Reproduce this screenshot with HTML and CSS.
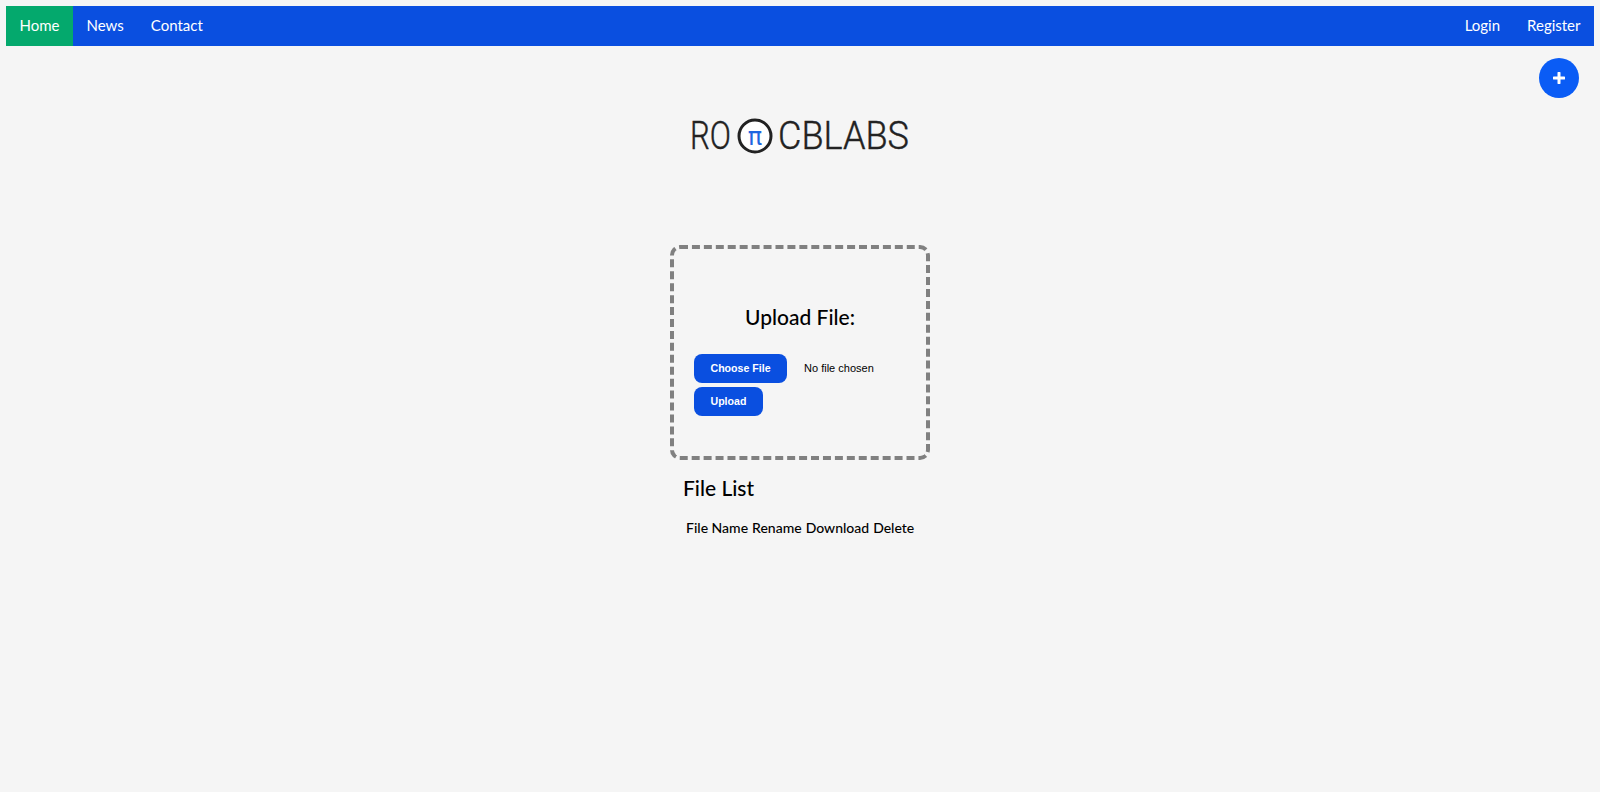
FILE: index.html
```html
<!DOCTYPE html>
<html lang="en">
<head>
  <meta charset="UTF-8">
  <meta name="viewport" content="width=device-width, initial-scale=1.0">
  <title>Rootcblabs</title>
  <link rel="stylesheet" href="styles.css">
</head>

<body>
  <nav class="topnav">
    <div class="nav-group">
      <a class="nav-link active" href="#">Home</a>
      <a class="nav-link" href="#">News</a>
      <a class="nav-link" href="#">Contact</a>
    </div>
    <div class="nav-group">
      <a class="nav-link" href="#">Login</a>
      <a class="nav-link" href="#">Register</a>
    </div>
  </nav>

  <button class="add-fab" aria-label="Add">
    <svg width="12" height="12" viewBox="0 0 12 12">
      <path d="M6 1v10M1 6h10" stroke="#fff" stroke-width="3" stroke-linecap="round"/>
    </svg>
  </button>

  <div class="logo">
    <svg width="300" height="48" viewBox="0 0 300 48">
      <text class="logo-text" x="40" y="37" textLength="41" lengthAdjust="spacingAndGlyphs">RO</text>
      <circle cx="105" cy="24" r="16" fill="#fff" stroke="#222" stroke-width="3"/>
      <text class="logo-pi" x="105" y="33" text-anchor="middle">π</text>
      <text class="logo-text" x="128" y="37" textLength="131" lengthAdjust="spacingAndGlyphs">CBLABS</text>
    </svg>
  </div>

  <main class="content">
    <form class="upload-box">
      <h2>Upload File:</h2>
      <div class="file-row">
        <button type="button" class="blue-btn">Choose File</button>
        <span class="file-status">No file chosen</span>
      </div>
      <button type="button" class="blue-btn">Upload</button>
    </form>

    <h3 class="list-title">File List</h3>
    <table class="file-table">
      <thead>
        <tr>
          <th>File Name</th>
          <th>Rename</th>
          <th>Download</th>
          <th>Delete</th>
        </tr>
      </thead>
    </table>
  </main>
</body>
</html>
```

FILE: styles.css
```css
* {
  margin: 0;
  padding: 0;
  box-sizing: border-box;
}

body {
  background-color: #f5f5f5;
  color: #000;
  min-height: 100vh;
  padding: 6px;
  font-family: 'Lato', 'Open Sans', sans-serif;
  position: relative;
}

.topnav {
  display: flex;
  justify-content: space-between;
  height: 40px;
  background-color: #0a4fe0;
}

.nav-group {
  display: flex;
}

.nav-link {
  display: flex;
  align-items: center;
  padding: 0 13.5px 2px;
  color: #fff;
  font-size: 15px;
  text-decoration: none;
}

.nav-link.active {
  background-color: #04a96d;
}

.add-fab {
  position: absolute;
  top: 58px;
  right: 21px;
  width: 40px;
  height: 40px;
  border: none;
  border-radius: 50%;
  background-color: #0a5cf5;
  display: flex;
  align-items: center;
  justify-content: center;
}

.logo {
  display: flex;
  justify-content: center;
  height: 48px;
  margin-top: 66px;
}

.logo-text {
  font-family: 'Roboto', sans-serif;
  font-size: 39px;
  font-weight: 300;
  fill: #222;
  stroke: #222;
  stroke-width: 0.4px;
}

.logo-pi {
  font-family: 'DejaVu Sans', sans-serif;
  font-size: 24px;
  fill: #1f66e0;
}

.content {
  width: 260px;
  margin: 85px auto 0;
}

.upload-box {
  height: 215px;
  border: 4px dashed #808080;
  border-radius: 10px;
  padding: 55px 20px 0;
}

.upload-box h2 {
  font-size: 21px;
  font-weight: 500;
  text-align: center;
  line-height: 26px;
  margin-bottom: 24px;
}

.file-row {
  display: flex;
  align-items: center;
  gap: 17px;
  margin-bottom: 4px;
}

.blue-btn {
  display: block;
  height: 29px;
  padding: 0 16.5px 2px;
  border: none;
  border-radius: 8px;
  background-color: #0a4fe0;
  color: #fff;
  font-family: 'Liberation Sans', sans-serif;
  font-size: 10.6px;
  font-weight: 700;
}

.file-status {
  padding-bottom: 2px;
  font-family: 'Liberation Sans', sans-serif;
  font-size: 11px;
}

.list-title {
  font-size: 21px;
  font-weight: 500;
  line-height: 26px;
  margin: 15px 0 0 13px;
}

.file-table {
  margin: 18px 0 0 14px;
  border-collapse: collapse;
}

.file-table th {
  font-size: 14px;
  font-weight: 500;
  padding: 0 2px;
  text-align: left;
}
```
